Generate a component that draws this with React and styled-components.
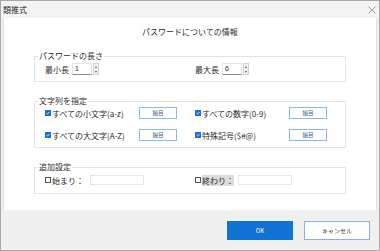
import React from 'react';
import styled, { createGlobalStyle } from 'styled-components';

const GlobalStyle = createGlobalStyle`
    html, body {
        margin: 0;
        padding: 0;
        background: #ffffff;
    }
    body {
        font-family: "Noto Sans CJK JP", "Noto Sans", sans-serif;
        color: #2b2b2b;
    }
`

const Ventana = styled.div`
    width: 380px;
    height: 251px;
    box-sizing: border-box;
    border: 1px solid #a9a9a9;
    background: #f0f0f0;
    display: flex;
    flex-direction: column;
`

const BarraTitulo = styled.div`
    height: 17px;
    display: flex;
    align-items: center;
    justify-content: space-between;
    padding: 0 2px;
    background: #f3f3f3;
    font-size: 8px;
    color: #1a1a1a;
`

const Cerrar = styled.svg`
    width: 8px;
    height: 8px;
    margin-right: 1px;
`

const Contenido = styled.div`
    height: 192px;
    margin: 0 2px;
    box-sizing: border-box;
    background: #ffffff;
    border-left: 1px solid #e2e2e2;
    border-right: 1px solid #e2e2e2;
    padding: 9px 30px 0 30px;
`

const Titulo = styled.div`
    text-align: center;
    font-size: 8px;
    line-height: 10px;
    margin-bottom: 14px;
`

const Grupo = styled.fieldset`
    margin: 0 0 ${p => p.$gap || 0}px 0;
    padding: ${p => p.$top}px 0 ${p => p.$bottom}px 10px;
    border: 1px solid #e4e4e4;
    min-width: 0;
`

const Leyenda = styled.legend`
    margin-left: -7px;
    padding: 0 1px;
    font-size: 8px;
    line-height: 10px;
`

const Cuadricula = styled.div`
    display: grid;
    grid-template-columns: 150px 1fr;
    row-gap: ${p => p.$gap || 0}px;
`

const Fila = styled.div`
    display: flex;
    align-items: center;
    height: 12px;
    font-size: 8px;
    white-space: nowrap;
`

const Etiqueta = styled.span`
    margin-right: 3px;
`

const Numero = styled.div`
    width: 20px;
    height: 12px;
    box-sizing: border-box;
    border: 1px solid #e3e3e3;
    border-bottom-color: #8a8a8a;
    font-size: 7px;
    line-height: 10px;
    padding-left: 2px;
    font-family: "Liberation Sans", sans-serif;
`

const Flechas = styled.div`
    width: 6px;
    height: 12px;
    margin-left: 1px;
    box-sizing: border-box;
    border: 1px solid #d0d0d0;
    background: #f4f4f4;
    display: flex;
    flex-direction: column;
    align-items: center;
    justify-content: space-around;
`

const Flecha = styled.div`
    width: 0;
    height: 0;
    border-left: 1.5px solid transparent;
    border-right: 1.5px solid transparent;
    ${p => p.$abajo ? 'border-top: 2px solid #555;' : 'border-bottom: 2px solid #555;'}
`

const Casilla = styled.span`
    width: 6px;
    height: 6px;
    box-sizing: border-box;
    flex: none;
    margin-right: 1px;
    display: inline-flex;
    align-items: center;
    justify-content: center;
    background: ${p => p.$marcada ? '#1f6fce' : '#ffffff'};
    border: 1px solid ${p => p.$marcada ? '#1f6fce' : '#555555'};
`

const Texto = styled.span`
    width: 87px;
    flex: none;
`

const Foco = styled.span`
    background: #dcdcdc;
`

const Boton = styled.button`
    width: 38px;
    height: 12px;
    padding: 0;
    box-sizing: border-box;
    border: 1px solid #86b9ec;
    background: #ffffff;
    font-family: inherit;
    font-size: 5.5px;
    color: #3f5f88;
`

const Campo = styled.div`
    width: 54px;
    height: 10px;
    box-sizing: border-box;
    border: 1px solid #e6e6e6;
    margin-left: ${p => p.$ml}px;
`

const Pie = styled.div`
    flex: 1;
    display: flex;
    justify-content: flex-end;
    align-items: flex-start;
    gap: 11px;
    padding: 11px 9px 0 0;
`

const BotonPie = styled.button`
    width: 66px;
    height: 19px;
    box-sizing: border-box;
    padding: 0;
    font-family: inherit;
    font-size: 6px;
    border: 1px solid ${p => p.$primario ? '#1173d4' : '#7fb4ea'};
    background: ${p => p.$primario ? '#1173d4' : '#ffffff'};
    color: ${p => p.$primario ? '#ffffff' : '#333333'};
`

const Check = () => (
    <svg width="4" height="4" viewBox="0 0 4 4">
        <path d="M0.6 2.1 L1.6 3 L3.4 1" stroke="#ffffff" strokeWidth="0.8" fill="none" />
    </svg>
)

const Spinner = ({ valor }) => (
    <>
        <Numero>{valor}</Numero>
        <Flechas>
            <Flecha />
            <Flecha $abajo />
        </Flechas>
    </>
)

const Opcion = ({ texto }) => (
    <Fila>
        <Casilla $marcada><Check /></Casilla>
        <Texto>{texto}</Texto>
        <Boton>細目</Boton>
    </Fila>
)

const App = () => {
    return (
        <>
            <GlobalStyle />
            <Ventana>
                <BarraTitulo>
                    <span>類推式</span>
                    <Cerrar viewBox="0 0 8 8">
                        <path d="M0.5 0.5 L7.5 7.5 M7.5 0.5 L0.5 7.5" stroke="#8a8a8a" strokeWidth="0.8" />
                    </Cerrar>
                </BarraTitulo>
                <Contenido>
                    <Titulo>パスワードについての情報</Titulo>

                    <Grupo $top={2} $bottom={6} $gap={14}>
                        <Leyenda>パスワードの長さ</Leyenda>
                        <Cuadricula>
                            <Fila>
                                <Etiqueta>最小長</Etiqueta>
                                <Spinner valor="1" />
                            </Fila>
                            <Fila>
                                <Etiqueta>最大長</Etiqueta>
                                <Spinner valor="6" />
                            </Fila>
                        </Cuadricula>
                    </Grupo>

                    <Grupo $top={1} $bottom={6} $gap={14}>
                        <Leyenda>文字列を指定</Leyenda>
                        <Cuadricula $gap={10}>
                            <Opcion texto="すべての小文字(a-z)" />
                            <Opcion texto="すべての数字(0-9)" />
                            <Opcion texto="すべての大文字(A-Z)" />
                            <Opcion texto="特殊記号($#@)" />
                        </Cuadricula>
                    </Grupo>

                    <Grupo $top={2} $bottom={7}>
                        <Leyenda>追加設定</Leyenda>
                        <Cuadricula>
                            <Fila>
                                <Casilla />
                                <span>始まり：</span>
                                <Campo $ml={6} />
                            </Fila>
                            <Fila>
                                <Casilla />
                                <Foco>終わり：</Foco>
                                <Campo $ml={4} />
                            </Fila>
                        </Cuadricula>
                    </Grupo>
                </Contenido>
                <Pie>
                    <BotonPie $primario>OK</BotonPie>
                    <BotonPie>キャンセル</BotonPie>
                </Pie>
            </Ventana>
        </>
    )
}

export default App
